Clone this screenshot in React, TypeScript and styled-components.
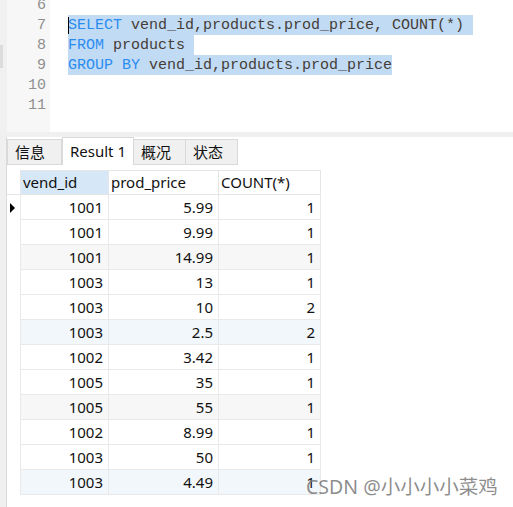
import styled, { createGlobalStyle } from 'styled-components';

const GlobalStyle = createGlobalStyle`
  html, body {
    margin: 0;
    padding: 0;
    background: #ffffff;
  }
`;

const CODE_LINES: { n: number; parts: { text: string; kw?: boolean }[]; sel?: boolean; eol?: boolean }[] = [
  { n: 6, parts: [] },
  {
    n: 7,
    sel: true,
    eol: true,
    parts: [
      { text: 'SELECT', kw: true },
      { text: ' vend_id,products.prod_price, COUNT(*)' },
    ],
  },
  {
    n: 8,
    sel: true,
    eol: true,
    parts: [{ text: 'FROM', kw: true }, { text: ' products' }],
  },
  {
    n: 9,
    sel: true,
    parts: [
      { text: 'GROUP BY', kw: true },
      { text: ' vend_id,products.prod_price' },
    ],
  },
  { n: 10, parts: [] },
  { n: 11, parts: [] },
];

const ROWS = [
  ['1001', '5.99', '1'],
  ['1001', '9.99', '1'],
  ['1001', '14.99', '1'],
  ['1003', '13', '1'],
  ['1003', '10', '2'],
  ['1003', '2.5', '2'],
  ['1002', '3.42', '1'],
  ['1005', '35', '1'],
  ['1005', '55', '1'],
  ['1002', '8.99', '1'],
  ['1003', '50', '1'],
  ['1003', '4.49', '1'],
];

const TABS = ['信息', 'Result 1', '概况', '状态'];

function rowTint(i: number) {
  if (i % 3 !== 2) return 'plain';
  return Math.floor(i / 3) % 2 === 0 ? 'gray' : 'blue';
}

export default function App() {
  return (
    <>
      <GlobalStyle />
      <Style.Page>
        <Style.Editor>
          <Style.EdgeStrip>
            <Style.EdgeThumb />
          </Style.EdgeStrip>
          <Style.Gutter>
            {CODE_LINES.map((line) => (
              <Style.LineNo key={line.n}>{line.n}</Style.LineNo>
            ))}
          </Style.Gutter>
          <Style.Code>
            {CODE_LINES.map((line) => (
              <Style.CodeLine key={line.n}>
                {line.n === 7 && <Style.Caret />}
                <Style.Selection $on={!!line.sel}>
                  {line.parts.map((p, i) =>
                    p.kw ? (
                      <Style.Keyword key={i}>{p.text}</Style.Keyword>
                    ) : (
                      <span key={i}>{p.text}</span>
                    ),
                  )}
                  {line.eol && ' '}
                </Style.Selection>
              </Style.CodeLine>
            ))}
          </Style.Code>
        </Style.Editor>
        <Style.Splitter />
        <Style.ResultPane>
          <Style.EdgeStrip $bordered />
          <Style.ResultBody>
            <Style.TabBar>
              {TABS.map((t, i) => (
                <Style.Tab key={t} $active={i === 1} $wide={i === 1}>
                  {t}
                </Style.Tab>
              ))}
            </Style.TabBar>
            <Style.Grid>
              <Style.Corner />
              <Style.HeadCell $selected>vend_id</Style.HeadCell>
              <Style.HeadCell>prod_price</Style.HeadCell>
              <Style.HeadCell>COUNT(*)</Style.HeadCell>
              {ROWS.map((row, i) => (
                <Style.Row key={i}>
                  <Style.Indicator>{i === 0 && <Style.Arrow />}</Style.Indicator>
                  {row.map((v, j) => (
                    <Style.Cell key={j} $tint={rowTint(i)}>
                      {v}
                    </Style.Cell>
                  ))}
                </Style.Row>
              ))}
            </Style.Grid>
          </Style.ResultBody>
          <Style.Watermark>CSDN @小小小小菜鸡</Style.Watermark>
        </Style.ResultPane>
      </Style.Page>
    </>
  );
}

const Style = {
  Page: styled.div`
    width: 513px;
    height: 507px;
    display: flex;
    flex-direction: column;
    overflow: hidden;
    background: #ffffff;
  `,
  Editor: styled.div`
    height: 132px;
    display: flex;
    flex-shrink: 0;
    overflow: hidden;
  `,
  EdgeStrip: styled.div<{ $bordered?: boolean }>`
    width: ${(p) => (p.$bordered ? '6px' : '7px')};
    flex-shrink: 0;
    background: #f0f0f0;
    border-right: ${(p) => (p.$bordered ? '1px solid #dadada' : 'none')};
    padding-top: 45px;
  `,
  EdgeThumb: styled.div`
    width: 3px;
    height: 23px;
    background: #dcdcdc;
  `,
  Gutter: styled.div`
    width: 43px;
    flex-shrink: 0;
    background: #f7f7f7;
    padding-right: 4px;
    box-sizing: border-box;
    font-family: 'Liberation Mono', monospace;
    font-size: 15px;
    color: #8f8f8f;
    text-align: right;
    & > :first-child {
      margin-top: -4px;
    }
  `,
  LineNo: styled.div`
    height: 20px;
    line-height: 20px;
  `,
  Code: styled.div`
    flex: 1;
    padding-left: 18px;
    font-family: 'Liberation Mono', monospace;
    font-size: 15px;
    color: #463d36;
    white-space: pre;
    & > :first-child {
      margin-top: -5px;
    }
  `,
  CodeLine: styled.div`
    height: 20px;
    line-height: 21px;
    position: relative;
  `,
  Caret: styled.span`
    position: absolute;
    left: 0;
    top: 2px;
    width: 1px;
    height: 17px;
    background: #000000;
  `,
  Selection: styled.span<{ $on: boolean }>`
    display: inline-block;
    height: 20px;
    background: ${(p) => (p.$on ? '#c1dbf5' : 'transparent')};
  `,
  Keyword: styled.span`
    color: #2b8cf0;
  `,
  Splitter: styled.div`
    height: 5px;
    flex-shrink: 0;
    background: #f0f0f0;
  `,
  ResultPane: styled.div`
    flex: 1;
    display: flex;
    position: relative;
  `,
  ResultBody: styled.div`
    flex: 1;
    display: flex;
    flex-direction: column;
    font-family: 'Noto Sans', 'Noto Sans CJK SC', sans-serif;
    font-size: 15px;
    color: #111111;
  `,
  TabBar: styled.div`
    height: 28px;
    display: flex;
    align-items: flex-end;
  `,
  Tab: styled.div<{ $active?: boolean; $wide?: boolean }>`
    width: ${(p) => (p.$wide ? '72px' : '52px')};
    height: ${(p) => (p.$active ? '28px' : '26px')};
    box-sizing: border-box;
    border: 1px solid #d9d9d9;
    border-left: ${(p) => (p.$active ? '1px solid #d9d9d9' : 'none')};
    border-bottom: ${(p) => (p.$active ? 'none' : '1px solid #d9d9d9')};
    background: ${(p) => (p.$active ? '#ffffff' : '#f0f0f0')};
    display: flex;
    align-items: center;
    padding-left: 7px;
    padding-bottom: 1px;
    font-size: 15px;
    &:first-child {
      width: 55px;
      border-left: 1px solid #d9d9d9;
      padding-left: 7px;
    }
  `,
  Grid: styled.div`
    margin-top: 5px;
    display: grid;
    grid-template-columns: 13px 89px 110px 102px;
    grid-auto-rows: 25px;
  `,
  Corner: styled.div`
    border-bottom: 1px solid #e6e6e6;
  `,
  HeadCell: styled.div<{ $selected?: boolean }>`
    box-sizing: border-box;
    border-top: 1px solid #e6e6e6;
    border-right: 1px solid #e6e6e6;
    border-bottom: 1px solid #e6e6e6;
    border-left: ${(p) => (p.$selected ? '1px solid #e6e6e6' : 'none')};
    background: ${(p) => (p.$selected ? '#d6e8f7' : '#ffffff')};
    padding-left: 2px;
    line-height: 23px;
    white-space: nowrap;
  `,
  Row: styled.div`
    display: contents;
  `,
  Indicator: styled.div`
    display: flex;
    align-items: center;
    padding-left: 3px;
  `,
  Arrow: styled.div`
    width: 0;
    height: 0;
    border-top: 5px solid transparent;
    border-bottom: 5px solid transparent;
    border-left: 5px solid #000000;
  `,
  Cell: styled.div<{ $tint: string }>`
    box-sizing: border-box;
    border-right: 1px solid #e9e9e9;
    border-bottom: 1px solid #e9e9e9;
    &:nth-child(2) {
      border-left: 1px solid #e9e9e9;
    }
    background: ${(p) =>
      p.$tint === 'gray' ? '#f7f7f7' : p.$tint === 'blue' ? '#f2f7fc' : '#ffffff'};
    text-align: right;
    padding-right: 5px;
    line-height: 24px;
  `,
  Watermark: styled.div`
    position: absolute;
    left: 306px;
    top: 337px;
    font-family: 'Noto Sans', 'Noto Sans CJK SC', sans-serif;
    font-size: 19.5px;
    line-height: 26px;
    color: rgba(120, 120, 120, 0.85);
    white-space: nowrap;
    pointer-events: none;
  `,
};
